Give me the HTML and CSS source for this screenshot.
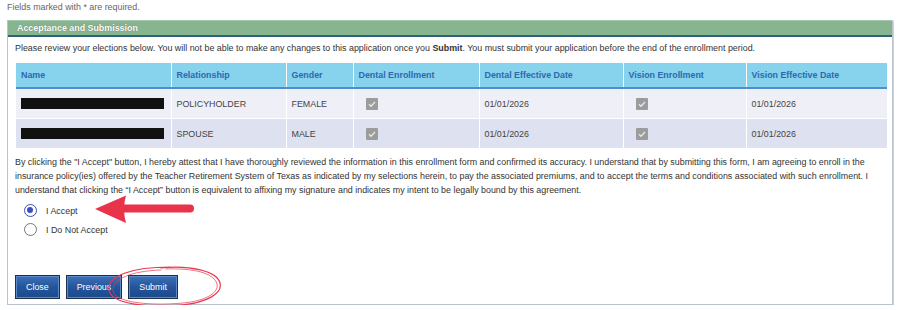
FILE: index.html
```
<!DOCTYPE html>
<html lang="en">
<head>
    <meta charset="UTF-8">
    <title>Acceptance and Submission</title>
    <link rel="stylesheet" href="styles.css">
</head>
<body>
    <p class="note">Fields marked with * are required.</p>
    <div class="panel">
        <div class="panel-head">Acceptance and Submission</div>
        <div class="panel-body">
            <p class="intro">Please review your elections below. You will not be able to make any changes to this application once you <b>Submit</b>. You must submit your application before the end of the enrollment period.</p>
            <table class="elections">
                <colgroup>
                    <col style="width:155px"><col style="width:115px"><col style="width:67px"><col style="width:126px"><col style="width:144px"><col style="width:123px"><col style="width:141px">
                </colgroup>
                <thead>
                    <tr>
                        <th>Name</th>
                        <th>Relationship</th>
                        <th>Gender</th>
                        <th>Dental Enrollment</th>
                        <th>Dental Effective Date</th>
                        <th>Vision Enrollment</th>
                        <th>Vision Effective Date</th>
                    </tr>
                </thead>
                <tbody>
                    <tr>
                        <td><span class="redacted"></span></td>
                        <td>POLICYHOLDER</td>
                        <td>FEMALE</td>
                        <td><span class="check"><svg viewBox="0 0 12 12"><path d="M3 6.3l2 2 4-4.3"/></svg></span></td>
                        <td>01/01/2026</td>
                        <td><span class="check"><svg viewBox="0 0 12 12"><path d="M3 6.3l2 2 4-4.3"/></svg></span></td>
                        <td>01/01/2026</td>
                    </tr>
                    <tr class="alt">
                        <td><span class="redacted"></span></td>
                        <td>SPOUSE</td>
                        <td>MALE</td>
                        <td><span class="check"><svg viewBox="0 0 12 12"><path d="M3 6.3l2 2 4-4.3"/></svg></span></td>
                        <td>01/01/2026</td>
                        <td><span class="check"><svg viewBox="0 0 12 12"><path d="M3 6.3l2 2 4-4.3"/></svg></span></td>
                        <td>01/01/2026</td>
                    </tr>
                </tbody>
            </table>
            <p class="attest">By clicking the "I Accept" button, I hereby attest that I have thoroughly reviewed the information in this enrollment form and confirmed its accuracy. I understand that by submitting this form, I am agreeing to enroll in the insurance policy(ies) offered by the Teacher Retirement System of Texas as indicated by my selections herein, to pay the associated premiums, and to accept the terms and conditions associated with such enrollment. I understand that clicking the “I Accept” button is equivalent to affixing my signature and indicates my intent to be legally bound by this agreement.</p>
            <div class="choices">
                <label class="choice"><span class="radio on"></span>I Accept</label>
                <label class="choice"><span class="radio"></span>I Do Not Accept</label>
                <svg class="arrow" width="102" height="34" viewBox="0 0 102 34">
                    <path d="M96 13.5H30" stroke="#e8334a" stroke-width="8" stroke-linecap="round" fill="none"/>
                    <path d="M1 14L32 0.5Q28 14 32 28Z" fill="#e8334a"/>
                </svg>
            </div>
            <div class="actions">
                <button class="btn">Close</button>
                <button class="btn">Previous</button>
                <button class="btn">Submit</button>
                <svg class="circle" width="124" height="46" viewBox="0 0 124 46">
                    <g fill="none" stroke="#e83a52" stroke-linecap="round">
                        <path d="M66 3C28 3 3 12 5 26c2 14 38 18 72 15 24-2 42-11 39-22C113 7 86 1 57 4" stroke-width="1.2"/>
                        <path d="M57 6C27 7 8 15 9 27c2 12 39 15 70 12 22-2 36-10 34-19C110 9 90 4 62 5" stroke-width="0.9" opacity="0.8"/>
                    </g>
                </svg>
            </div>
        </div>
    </div>
</body>
</html>
```
FILE: styles.css
```
body {
    font-family: 'Liberation Sans', Arial, sans-serif;
    font-size: 8.9px;
    color: #333;
    background-color: #fff;
    margin: 0;
    padding: 0 7px;
}
.note {
    margin: 0;
    padding-top: 2px;
    height: 18px;
    color: #666;
}
.panel {
    border: 1px solid #b7c4d0;
    border-top: none;
    box-shadow: 1px 1px 0 #c9d3dc;
    height: 285px;
    box-sizing: border-box;
}
.panel-head {
    background-color: #86b58f;
    border-top: 1px solid #a6c8ac;
    border-bottom: 2px solid #2f617a;
    color: #fff;
    font-weight: bold;
    height: 14px;
    line-height: 14px;
    padding-left: 9px;
    text-shadow: 0 0 1px #4d6e55;
}
.panel-body {
    padding: 4px 6px 0 7px;
}
.intro {
    margin: 0 0 8px 0;
    line-height: 14px;
}
.elections {
    width: 871px;
    border-collapse: collapse;
    table-layout: fixed;
    margin-left: 1px;
}
.elections th {
    background-color: #87d2ec;
    color: #2d68b0;
    font-weight: bold;
    text-align: left;
    height: 24px;
    padding: 0 5px;
    border-left: 1px solid #fff;
    border-bottom: 2px solid #4f8fd0;
}
.elections td {
    background-color: #efeff8;
    height: 29px;
    padding: 0 5px;
    border-left: 1px solid #fff;
    border-bottom: 1px solid #fff;
    color: #444;
}
.elections tr.alt td {
    background-color: #dee1ef;
}
.elections th:first-child,
.elections td:first-child {
    border-left: none;
}
.redacted {
    display: block;
    width: 143px;
    height: 11px;
    background-color: #111;
}
.check {
    display: block;
    width: 12px;
    height: 12px;
    margin-left: 7px;
    background-color: #9c9c9c;
    border-radius: 1px;
}
.check svg {
    display: block;
    width: 12px;
    height: 12px;
    fill: none;
    stroke: #e8e8e8;
    stroke-width: 1.3;
}
.attest {
    margin: 6px 0 0 0;
    line-height: 14px;
}
.choices {
    position: relative;
    margin-top: 4px;
    padding-left: 9px;
}
.choice {
    display: flex;
    align-items: center;
    height: 19px;
    color: #333;
}
.radio {
    display: inline-block;
    width: 13px;
    height: 13px;
    border: 1.5px solid #767676;
    border-radius: 50%;
    margin-right: 9px;
    box-sizing: border-box;
    position: relative;
}
.radio.on {
    border-color: #3b4cc0;
}
.radio.on::after {
    content: '';
    position: absolute;
    left: 2px;
    top: 2px;
    width: 6px;
    height: 6px;
    border-radius: 50%;
    background-color: #3b4cc0;
}
.arrow {
    position: absolute;
    left: 79px;
    top: -6px;
}
.actions {
    position: relative;
    display: flex;
    gap: 6px;
    margin-top: 36px;
}
.btn {
    font-family: 'Liberation Sans', Arial, sans-serif;
    font-size: 8.9px;
    color: #fff;
    height: 24px;
    padding: 0 10px;
    border: 1px solid #1d2f4a;
    background: linear-gradient(#3d71b7, #23559c 50%, #1b4a8c);
    box-shadow: inset 0 0 0 1px #5b8ac7;
    cursor: pointer;
}
.circle {
    position: absolute;
    left: 89px;
    top: -11px;
}
```
